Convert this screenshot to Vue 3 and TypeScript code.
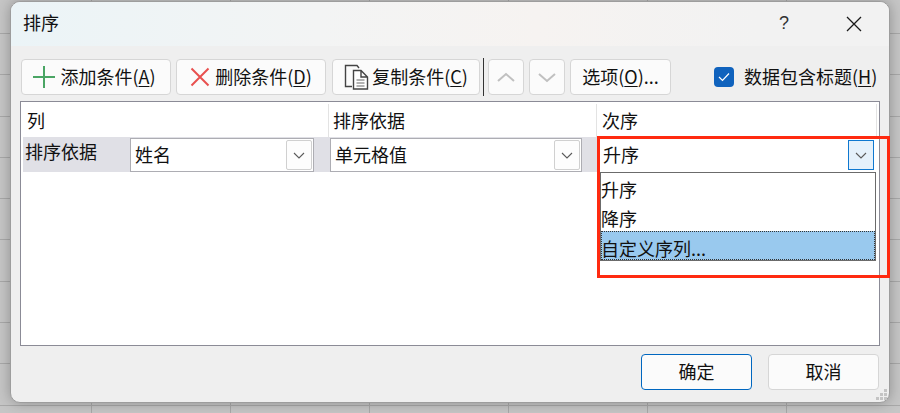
<script setup lang="ts">
const toolbarTail = [
  { key: 'up', d: 'M3 10 L11 3 L19 10' },
  { key: 'down', d: 'M3 3 L11 10 L19 3' },
]
const rowCombos = [
  { text: '姓名', cls: 'c1', active: false },
  { text: '单元格值', cls: 'c2', active: false },
  { text: '升序', cls: 'c3', active: true },
]
const gripDots = [
  [9, 0], [5, 4], [9, 4], [1, 8], [5, 8], [9, 8],
]
</script>

<template>
  <div class="page">
    <div class="dialog">
      <header class="titlebar">
        <span class="title">排序</span>
        <span class="help">?</span>
        <svg class="close" width="16" height="16" viewBox="0 0 16 16">
          <path d="M1 1 L15 15 M15 1 L1 15" stroke="#1a1a1a" stroke-width="1.3" fill="none" />
        </svg>
      </header>

      <div class="toolbar">
        <button class="btn b-add">
          <svg width="22" height="22" viewBox="0 0 22 22">
            <path d="M11 0 V22 M0 11 H22" stroke="#4aa564" stroke-width="2" fill="none" />
          </svg>
          <span class="lbl">添加条件(<u>A</u>)</span>
        </button>
        <button class="btn b-del">
          <svg width="20" height="20" viewBox="0 0 20 20">
            <path d="M1.5 1.5 L18.5 18.5 M18.5 1.5 L1.5 18.5" stroke="#e8504f" stroke-width="2" fill="none" />
          </svg>
          <span class="lbl">删除条件(<u>D</u>)</span>
        </button>
        <button class="btn b-copy">
          <svg width="25" height="26" viewBox="0 0 25 26">
            <path d="M8 22.5 H1.5 V1.5 H13 L15 4" stroke="#444" stroke-width="1.4" fill="none" />
            <path d="M9.5 6.5 H17 L23.5 13 V25 H9.5 Z M17 6.5 V13 H23.5" stroke="#444" stroke-width="1.4" fill="#fff" />
            <path d="M12.5 16 H20.5 M12.5 19 H20.5 M12.5 22 H20.5" stroke="#666" stroke-width="1" fill="none" />
          </svg>
          <span class="lbl">复制条件(<u>C</u>)</span>
        </button>
        <i class="sep"></i>
        <button v-for="a in toolbarTail" :key="a.key" class="btn b-arrow" :class="'b-' + a.key">
          <svg width="22" height="13" viewBox="0 0 22 13">
            <path :d="a.d" stroke="#c0c0c0" stroke-width="2" fill="none" />
          </svg>
        </button>
        <button class="btn b-opt"><span class="lbl">选项(<u>O</u>)...</span></button>
        <label class="check">
          <span class="box">
            <svg width="12" height="10" viewBox="0 0 12 10">
              <path d="M1 5 L4.5 8.5 L11 1.5" stroke="#fff" stroke-width="1.2" fill="none" />
            </svg>
          </span>
          <span class="lbl">数据包含标题(<u>H</u>)</span>
        </label>
      </div>

      <section class="table">
        <div class="thead">
          <span class="th th1">列</span>
          <span class="th th2">排序依据</span>
          <span class="th th3">次序</span>
        </div>
        <div class="trow">
          <span class="rowlabel">排序依据</span>
          <div v-for="c in rowCombos" :key="c.cls" class="combo" :class="c.cls">
            <span class="combo-text">{{ c.text }}</span>
            <span class="combo-btn" :class="{ active: c.active }">
              <svg width="12" height="7" viewBox="0 0 12 7">
                <path d="M1 1 L6 6 L11 1" stroke="#5a5a5a" stroke-width="1.1" fill="none" />
              </svg>
            </span>
          </div>
        </div>

        <ul class="dropdown">
          <li>升序</li>
          <li>降序</li>
          <li class="selected">自定义序列...</li>
        </ul>
        <div class="highlight"></div>
      </section>

      <footer class="footer">
        <button class="btn foot primary"><span class="lbl">确定</span></button>
        <button class="btn foot"><span class="lbl">取消</span></button>
      </footer>

      <svg class="grip" width="13" height="12" viewBox="0 0 13 12">
        <rect v-for="(g, i) in gripDots" :key="i" :x="g[0]" :y="g[1]" width="3" height="3" fill="#c4c4c4" />
      </svg>
    </div>
  </div>
</template>

<style scoped>
.page {
  width: 900px;
  height: 413px;
  box-sizing: border-box;
  padding: 1px 0 0 10px;
  overflow: hidden;
  background-color: #c6c6c6;
  background-image:
    repeating-linear-gradient(to right, transparent 0 91px, #a9a9a9 91px 92px, transparent 92px 139px),
    repeating-linear-gradient(to bottom, transparent 0 33px, #a9a9a9 33px 34px, transparent 34px 41.3px);
  font-family: "Noto Sans CJK SC", "Liberation Sans", sans-serif;
  font-size: 18px;
  color: #111;
}
.dialog {
  position: relative;
  width: 880px;
  height: 402px;
  box-sizing: border-box;
  display: flex;
  flex-direction: column;
  background: #efefef;
  border: 1px solid #9d9d9d;
  border-radius: 10px;
  box-shadow: 0 0 14px rgba(0, 0, 0, 0.28);
}
.titlebar {
  height: 44px;
  flex: none;
  display: flex;
  align-items: center;
  padding: 0 27px 0 12px;
  box-sizing: border-box;
  border-radius: 9px 9px 0 0;
  background: linear-gradient(to right, #ebf4f7 0%, #f3f4f4 35%, #f6f3f1 60%, #f2f2f2 85%, #f2f2f2 100%);
}
.title { flex: 1; line-height: 1; padding-bottom: 4px; }
.help {
  font-family: "Liberation Sans", sans-serif;
  font-size: 18px;
  margin-right: 57px;
  padding-bottom: 2px;
  color: #333;
}
.close { margin-bottom: 1px; }
.toolbar {
  display: flex;
  align-items: center;
  height: 38px;
  margin: 12px 0 0 10px;
}
.btn {
  box-sizing: border-box;
  height: 36px;
  padding: 0;
  display: flex;
  align-items: center;
  justify-content: center;
  font: inherit;
  color: inherit;
  background: #fbfbfb;
  border: 1px solid #d6d6d6;
  border-radius: 4px;
  line-height: 1;
}
.lbl { line-height: 1; padding-bottom: 2px; }
u { text-underline-offset: 2px; text-decoration-thickness: 1px; }
.b-add { width: 150px; gap: 5px; padding-right: 3px; }
.b-del { width: 150px; margin-left: 5px; gap: 5px; }
.b-copy { width: 148px; margin-left: 6px; gap: 3px; }
.sep { width: 1px; height: 38px; background: #333; margin: 0 4px 0 3px; }
.b-arrow { width: 36px; margin-right: 5px; }
.b-opt { width: 101px; }
.check {
  display: flex;
  align-items: center;
  margin-left: 43px;
  gap: 10px;
}
.box {
  width: 20px;
  height: 20px;
  border-radius: 4px;
  background: #0f62bd;
  display: flex;
  align-items: center;
  justify-content: center;
}
.table {
  position: relative;
  margin: 5px 0 0 9px;
  width: 860px;
  height: 245px;
  box-sizing: border-box;
  background: #fff;
  border: 1px solid #8b8b96;
}
.thead {
  height: 35px;
  display: grid;
  grid-template-columns: 308px 268px 280px;
}
.th {
  display: flex;
  align-items: center;
  margin-top: 2px;
  padding: 0 0 2px 6px;
  box-sizing: border-box;
  border-right: 1px solid #e3e3e3;
  line-height: 1;
}
.th2 { padding-left: 4px; }
.th3 { padding-left: 5px; }
.trow {
  margin-left: 2px;
  width: 854px;
  height: 35px;
  background: #e0e0e6;
  display: flex;
}
.rowlabel {
  width: 107px;
  flex: none;
  padding: 4px 0 0 2px;
  box-sizing: border-box;
  line-height: 1.2;
}
.combo {
  box-sizing: border-box;
  flex: none;
  height: 34px;
  margin-top: 1px;
  display: flex;
  align-items: center;
  justify-content: space-between;
  background: #fff;
  border: 1px solid #adadb3;
  padding: 0 1px 0 4px;
}
.c1 { width: 184px; }
.c2 { width: 252px; margin-left: 16px; }
.c3 { width: 280px; margin-left: 15px; border-color: #fff; padding: 0 2px 0 5px; }
.combo-text { line-height: 1; padding-bottom: 2px; }
.combo-btn {
  width: 26px;
  height: 30px;
  box-sizing: border-box;
  display: flex;
  align-items: center;
  justify-content: center;
  background: #fdfdfd;
  border: 1px solid #d0d0d0;
  border-radius: 2px;
}
.combo-btn.active {
  background: #e5f1fb;
  border-color: #0f78d0;
  border-radius: 0;
}
.dropdown {
  position: absolute;
  left: 579px;
  top: 70px;
  width: 276px;
  height: 89px;
  box-sizing: border-box;
  margin: 0;
  padding: 0;
  list-style: none;
  background: #fff;
  border: 1px solid #6b6b6b;
}
.dropdown li {
  height: 29px;
  line-height: 33px;
  box-sizing: border-box;
  padding-left: 0;
}
.dropdown li.selected {
  background: #99c9ee;
  outline: 1px dotted #333;
  outline-offset: -1px;
  line-height: 34px;
}
.highlight {
  position: absolute;
  left: 576px;
  top: 34px;
  width: 293px;
  height: 142px;
  box-sizing: border-box;
  border: 3px solid #ff2a10;
  pointer-events: none;
}
.footer {
  position: absolute;
  right: 10px;
  bottom: 12px;
  display: flex;
  gap: 16px;
}
.foot { width: 111px; }
.foot .lbl { padding-bottom: 3px; }
.primary { border-color: #0067c0; }
.grip { position: absolute; right: 1px; bottom: 1px; }
</style>
